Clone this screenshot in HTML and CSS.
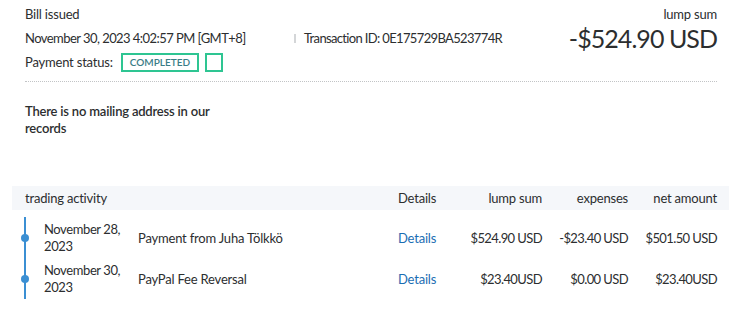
FILE: index.html
```html
<!DOCTYPE html>
<html lang="en">
<head>
  <meta charset="UTF-8" />
  <meta name="viewport" content="width=device-width, initial-scale=1" />
  <title>Transaction details</title>
  <link rel="stylesheet" href="styles.css">
</head>
<body>

  <main class="page">

    <header class="summary">
      <div class="summary-main">
        <div class="line">Bill issued</div>
        <div class="line meta">
          <span class="meta-date">November 30, 2023 4:02:57 PM [GMT+8]</span>
          <span class="meta-id">Transaction ID: 0E175729BA523774R</span>
        </div>
        <div class="line status">
          <span>Payment status:</span>
          <span class="badge">COMPLETED</span>
          <span class="badge badge-empty"></span>
        </div>
      </div>
      <div class="summary-total">
        <div class="line">lump sum</div>
        <div class="total">-$524.90 USD</div>
      </div>
    </header>

    <section class="address">
      <p>There is no mailing address in our records</p>
    </section>

    <section class="activity">
      <div class="activity-head">
        <span class="span-3">trading activity</span>
        <span>Details</span>
        <span class="num">lump sum</span>
        <span class="num">expenses</span>
        <span class="num">net amount</span>
      </div>

      <div class="activity-row">
        <span class="track"><i class="dot"></i></span>
        <span class="date">November 28, 2023</span>
        <span>Payment from Juha Tölkkö</span>
        <a class="link" href="#">Details</a>
        <span class="num">$524.90 USD</span>
        <span class="num">-$23.40 USD</span>
        <span class="num">$501.50 USD</span>
      </div>

      <div class="activity-row">
        <span class="track"><i class="dot"></i></span>
        <span class="date">November 30, 2023</span>
        <span>PayPal Fee Reversal</span>
        <a class="link" href="#">Details</a>
        <span class="num">$23.40USD</span>
        <span class="num">$0.00 USD</span>
        <span class="num">$23.40USD</span>
      </div>
    </section>

  </main>

</body>
</html>
```

FILE: styles.css
```css
body {
  margin: 0; font-family: Lato, "Noto Sans", sans-serif; font-size: 13px; color: #2c2e2f; background: #fff;
  letter-spacing: -0.2px;
}
.page { padding: 0 11px 0 12px; }

.summary { display: flex; justify-content: space-between; padding: 2px 12px 0 13px; }
.summary-main .line { height: 24px; display: flex; align-items: center; }
.meta { letter-spacing: -0.55px; }
.meta-date { width: 269px; }
.meta-id { border-left: 2px solid #d4d6d8; padding-left: 8px; line-height: 9px; letter-spacing: -0.65px; }
.badge {
  display: inline-flex; align-items: center; justify-content: center;
  height: 15px; border: 2px solid #2ec592; margin-left: 8px;
  padding: 0 7px; font-size: 10px; font-weight: 600; letter-spacing: 0; color: #3a7c86;
}
.badge-empty { width: 14px; padding: 0; margin-left: 6px; }

.summary-total { text-align: right; }
.summary-total .line { height: 24px; display: flex; align-items: center; justify-content: flex-end; }
.total { font-size: 25px; line-height: 24px; letter-spacing: -0.95px; }

.address { margin: 7px 12px 0 13px; border-top: 1px dotted #c2c4c6; padding-top: 21px; height: 83px; }
.address p { margin: 0; width: 200px; font-weight: 600; line-height: 17px; }

.activity-head, .activity-row {
  display: grid;
  grid-template-columns: 19px 94px 1fr 62px 82px 86px 89px;
  align-items: center;
  padding: 0 12px 0 13px;
}
.activity-head { background: #f5f7fa; height: 24px; }
.span-3 { grid-column: span 3; }
.num { text-align: right; }
.activity-row .num { letter-spacing: -0.6px; }

.activity { padding-bottom: 8px; }
.activity-head + .activity-row { margin-top: 7px; }
.activity-row { height: 41px; align-items: stretch; }
.activity-row > span, .activity-row > a { display: flex; align-items: center; }
.activity-row > .num { justify-content: flex-end; }
.date { line-height: 17px; padding-right: 10px; letter-spacing: -0.4px; }

.track {
  margin-left: -1px;
  background: linear-gradient(#3b8fd3, #3b8fd3) no-repeat 0 0 / 2px 100%;
}
.dot { width: 8px; height: 8px; border-radius: 50%; background: #3b8fd3; margin-left: -3px; }

.link { color: #1a6db3; text-decoration: none; }
```
